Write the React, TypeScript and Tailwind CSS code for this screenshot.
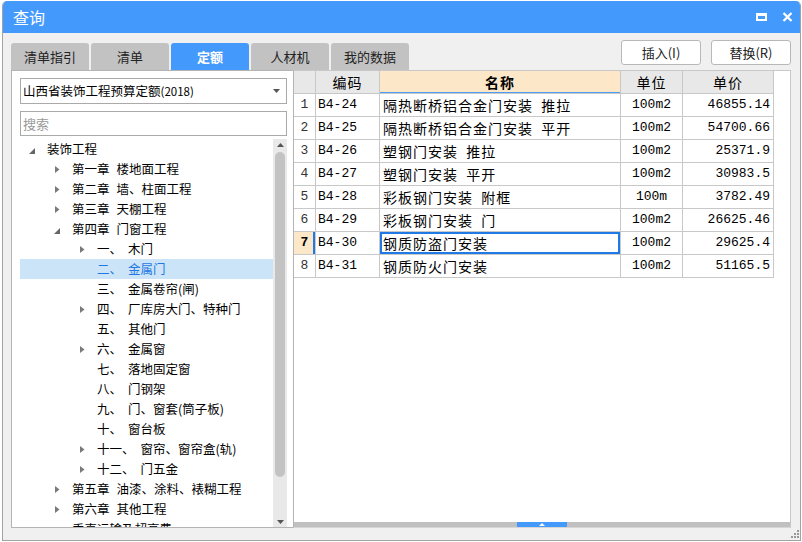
import React from "react";

type TNode = { lvl: 0 | 1 | 2; a?: "c" | "e"; num?: string; t: string; gap?: 6 | 7; sel?: boolean };

const tree: TNode[] = [
  { lvl: 0, a: "e", t: "装饰工程" },
  { lvl: 1, a: "c", num: "第一章", gap: 7, t: "楼地面工程" },
  { lvl: 1, a: "c", num: "第二章", gap: 7, t: "墙、柱面工程" },
  { lvl: 1, a: "c", num: "第三章", gap: 7, t: "天棚工程" },
  { lvl: 1, a: "e", num: "第四章", gap: 7, t: "门窗工程" },
  { lvl: 2, a: "c", num: "一、", gap: 6, t: "木门" },
  { lvl: 2, num: "二、", gap: 6, t: "金属门", sel: true },
  { lvl: 2, num: "三、", gap: 6, t: "金属卷帘(闸)" },
  { lvl: 2, a: "c", num: "四、", gap: 6, t: "厂库房大门、特种门" },
  { lvl: 2, num: "五、", gap: 6, t: "其他门" },
  { lvl: 2, a: "c", num: "六、", gap: 6, t: "金属窗" },
  { lvl: 2, num: "七、", gap: 6, t: "落地固定窗" },
  { lvl: 2, num: "八、", gap: 6, t: "门钢架" },
  { lvl: 2, num: "九、", gap: 6, t: "门、窗套(筒子板)" },
  { lvl: 2, num: "十、", gap: 6, t: "窗台板" },
  { lvl: 2, a: "c", num: "十一、", gap: 6, t: "窗帘、窗帘盒(轨)" },
  { lvl: 2, a: "c", num: "十二、", gap: 6, t: "门五金" },
  { lvl: 1, a: "c", num: "第五章", gap: 7, t: "油漆、涂料、裱糊工程" },
  { lvl: 1, a: "c", num: "第六章", gap: 7, t: "其他工程" },
  { lvl: 1, t: "垂直运输及超高费" },
];

const rows = [
  ["1", "B4-24", "隔热断桥铝合金门安装  推拉", "100m2", "46855.14"],
  ["2", "B4-25", "隔热断桥铝合金门安装  平开", "100m2", "54700.66"],
  ["3", "B4-26", "塑钢门安装  推拉", "100m2", "25371.9"],
  ["4", "B4-27", "塑钢门安装  平开", "100m2", "30983.5"],
  ["5", "B4-28", "彩板钢门安装  附框", "100m", "3782.49"],
  ["6", "B4-29", "彩板钢门安装  门", "100m2", "26625.46"],
  ["7", "B4-30", "钢质防盗门安装", "100m2", "29625.4"],
  ["8", "B4-31", "钢质防火门安装", "100m2", "51165.5"],
];

const padCls = ["pl-[9px]", "pl-[34px]", "pl-[59px]"];
const cjk = "font-['Noto_Sans_CJK_SC',sans-serif]";
const mono = "font-['Liberation_Mono','Noto_Sans_CJK_SC',monospace]";
const cell = "border-r border-b border-[#c8c8c8] h-[23px] flex items-center";

function Arrow({ a }: { a?: "c" | "e" }) {
  if (a === "e")
    return (
      <svg width="6" height="6" viewBox="0 0 6 6" className="mt-[3px]">
        <polygon points="6,0 6,6 0,6" fill="#666" />
      </svg>
    );
  if (a === "c")
    return (
      <svg width="5" height="7" viewBox="0 0 5 7" className="ml-[1px]">
        <polygon points="0,0 4.5,3.5 0,7" fill="#7a7a7a" />
      </svg>
    );
  return null;
}

export default function App() {
  return (
    <div className={`w-[802px] h-[542px] bg-white overflow-hidden ${cjk}`}>
      <div className="ml-[2px] mt-[1px] w-[799px] h-[540px] flex flex-col bg-[#f0f0f0] border-x border-b border-[#a3a3a3] rounded-t-[5px] overflow-hidden">
        {/* title bar */}
        <div className="h-[32px] shrink-0 bg-[#4499fd] flex items-center pl-[10px] pr-[7px]">
          <span className="text-white text-[16px] leading-none">查询</span>
          <div className="ml-auto flex items-center gap-[15px]">
            <svg width="11" height="8" viewBox="0 0 11 8">
              <rect x="0" y="0" width="11" height="8" fill="white" />
              <rect x="2" y="3" width="7" height="3" fill="#4499fd" />
            </svg>
            <svg width="11" height="10" viewBox="0 0 11 10">
              <path d="M1.5 1 L9.5 9 M9.5 1 L1.5 9" stroke="white" strokeWidth="2.3" />
            </svg>
          </div>
        </div>

        <div className="flex-1 flex flex-col pl-[8px] pr-[9px] pt-[7px]">
          {/* tabs + buttons */}
          <div className="h-[30px] shrink-0 flex items-start">
            <div className="mt-[3px] flex gap-[2px]">
              {["清单指引", "清单", "定额", "人材机", "我的数据"].map((t) => (
                <div
                  key={t}
                  className={
                    t === "定额"
                      ? "w-[78px] h-[27px] rounded-t-[3px] bg-[#4499fd] text-white font-bold text-[13px] flex items-center justify-center"
                      : "w-[78px] h-[27px] rounded-t-[3px] bg-[#c2c2c2] text-[#222] text-[13px] flex items-center justify-center"
                  }
                >
                  {t}
                </div>
              ))}
            </div>
            <div className="ml-auto flex gap-[10px]">
              {["插入(I)", "替换(R)"].map((b) => (
                <div
                  key={b}
                  className="w-[80px] h-[25px] bg-white border border-[#b8b8b8] rounded-[3px] text-[13px] text-[#222] flex items-center justify-center font-['Noto_Sans_CJK_SC',sans-serif]"
                >
                  {b}
                </div>
              ))}
            </div>
          </div>

          {/* content */}
          <div className="h-[458px] shrink-0 flex">
            {/* left panel */}
            <div className="w-[282px] h-full bg-white border-l border-t border-b border-[#b4b4b4] pl-[8px] pt-[7px] flex flex-col">
              <div className="w-[267px] h-[26px] border border-[#aaaaaa] flex items-center pl-[2px] pr-[6px] text-[12.5px] text-black">
                <span>
                  山西省装饰工程预算定额<span className="text-[11.5px]">(2018)</span>
                </span>
                <svg width="7" height="4" viewBox="0 0 7 4" className="ml-auto">
                  <polygon points="0,0 7,0 3.5,4" fill="#555" />
                </svg>
              </div>
              <div className="mt-[7px] w-[267px] h-[25px] border border-[#aaaaaa] flex items-center pl-[2px] text-[13px] text-[#9a9a9a]">
                搜索
              </div>
              <div className="mt-[3px] w-[267px] h-[388px] flex">
                <div className="w-[253px] h-full overflow-hidden">
                  {tree.map((n, i) => (
                    <div
                      key={i}
                      className={`h-[20px] flex items-center ${padCls[n.lvl]} ${n.sel ? "bg-[#cce4f8] text-[#1f78e6]" : "text-black"}`}
                    >
                      <div className="w-[18px] h-full flex items-center">
                        <Arrow a={n.a} />
                      </div>
                      <span className="text-[12.5px] leading-none whitespace-nowrap">
                        {n.num}
                        {n.num ? (
                          <span className={n.gap === 7 ? "ml-[7px]" : "ml-[6px]"}>{n.t}</span>
                        ) : (
                          n.t
                        )}
                      </span>
                    </div>
                  ))}
                </div>
                <div className="w-[14px] h-full bg-[#e9e9e9] flex flex-col items-center">
                  <svg width="7" height="4" viewBox="0 0 7 4" className="mt-[4px]">
                    <polygon points="3.5,0 7,4 0,4" fill="#555" />
                  </svg>
                  <div className="mt-[5px] w-[10px] h-[325px] rounded-full bg-[#c3c3c3]" />
                  <svg width="7" height="4" viewBox="0 0 7 4" className="mt-auto mb-[3px]">
                    <polygon points="0,0 7,0 3.5,4" fill="#555" />
                  </svg>
                </div>
              </div>
            </div>

            {/* right panel */}
            <div className="w-[498px] h-full bg-white border-l border-r border-t border-b border-l-[#b4b4b4] border-r-[#c8c8c8] border-t-[#c8c8c8] border-b-[#d6d6d6] flex flex-col">
              <div className="flex-1">
                <div className="grid grid-cols-[22px_64px_241px_62px_91px] w-[480px] text-[14px] text-black">
                  <div className={`${cell} bg-[#e8e8e8]`} />
                  <div className={`${cell} bg-[#e8e8e8] justify-center tracking-[1px]`}>编码</div>
                  <div className={`${cell} bg-[#fde7c9] justify-center font-bold tracking-[1px] shadow-[inset_0_-1px_0_#4d9cf5]`}>名称</div>
                  <div className={`${cell} bg-[#e8e8e8] justify-center tracking-[1px]`}>单位</div>
                  <div className={`${cell} bg-[#e8e8e8] justify-center tracking-[1px]`}>单价</div>
                  {rows.map((r) => {
                    const sel = r[0] === "7";
                    return (
                      <React.Fragment key={r[0]}>
                        <div
                          className={`${cell} justify-center ${mono} text-[13px] ${
                            sel ? "bg-[#fde7c9] font-bold shadow-[inset_-2px_0_0_#1f7ae6]" : "text-[#333]"
                          }`}
                        >
                          {r[0]}
                        </div>
                        <div className={`${cell} pl-[2px] ${mono} text-[13px]`}>{r[1]}</div>
                        <div
                          className={`${cell} pl-[3px] tracking-[1px] whitespace-pre ${
                            sel ? "shadow-[inset_0_0_0_2px_#1f7ae6]" : ""
                          }`}
                        >
                          {r[2]}
                        </div>
                        <div className={`${cell} justify-center ${mono} text-[13px]`}>{r[3]}</div>
                        <div className={`${cell} justify-end pr-[3px] ${mono} text-[13px]`}>{r[4]}</div>
                      </React.Fragment>
                    );
                  })}
                </div>
              </div>
              <div className="h-[5px] bg-[#c0c0c0] flex">
                <div className="ml-[223px] w-[50px] h-full bg-[#4499fd] flex items-start justify-center">
                  <svg width="6" height="3" viewBox="0 0 6 3" className="mt-[1px]">
                    <polygon points="3,0 6,3 0,3" fill="white" />
                  </svg>
                </div>
              </div>
            </div>
          </div>

          {/* bottom area */}
          <div className="flex-1 flex items-end justify-end pb-[2px] -mr-[8px]">
            <svg width="8" height="8" viewBox="0 0 8 8">
              <rect x="6" y="0" width="2" height="2" fill="#999" />
              <rect x="3" y="3" width="2" height="2" fill="#999" />
              <rect x="6" y="3" width="2" height="2" fill="#999" />
              <rect x="0" y="6" width="2" height="2" fill="#999" />
              <rect x="3" y="6" width="2" height="2" fill="#999" />
              <rect x="6" y="6" width="2" height="2" fill="#999" />
            </svg>
          </div>
        </div>
      </div>
    </div>
  );
}
